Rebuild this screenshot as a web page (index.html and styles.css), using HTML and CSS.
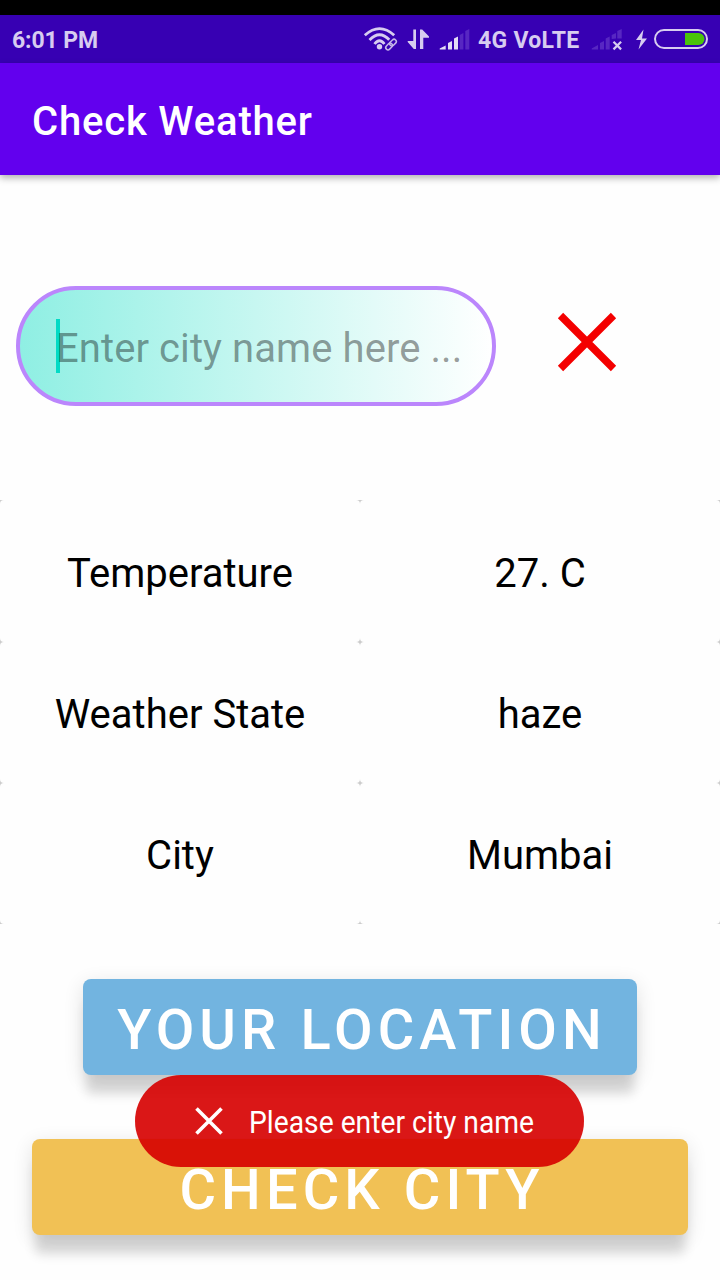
FILE: index.html
```html
<!DOCTYPE html>
<html lang="en">
<head>
<meta charset="utf-8">
<title>Check Weather</title>
<link rel="stylesheet" href="styles.css">
</head>
<body>
<div class="screen">
  <div class="status-bar">
    <span class="clock">6:01 PM</span>
    <div class="status-icons">
      <svg class="signals" width="108" height="48" viewBox="0 0 108 48">
        <g fill="none" stroke="#d7ccf0" stroke-width="2.800">
          <path d="M.8 20.200Q15.500 7 30.200 20.200"/>
          <path d="M5.500 25Q15.500 14.500 25.500 25"/>
          <path d="M10.500 29Q15.500 22.500 20.500 29"/>
        </g>
        <circle cx="15.500" cy="31.800" r="2.700" fill="#d7ccf0"/>
        <g transform="rotate(-45 27 29.500)" fill="none" stroke="#3700b3" stroke-width="4"><rect x="21" y="27" width="12" height="5" rx="2.500"/></g>
        <g transform="rotate(-45 27 29.500)" fill="none" stroke="#c6b6e8" stroke-width="1.500"><rect x="20.500" y="27.300" width="7.500" height="4.500" rx="2.250"/><rect x="26" y="27.300" width="7.500" height="4.500" rx="2.250"/></g>
        <path fill="#d7ccf0" d="M49.300 14.500H52V34h-2.200L43.700 27v-1h5.600zM56 34V14.500h2.200l6.800 7v1.200h-5.700V34z"/>
        <path fill="#e4dcf5" d="M75.700 34.500v-1l6-3v4zM84 34.500V28l4-2v8.500zM90 34.500V23.500l4-2v13z"/>
        <path fill="#5727c2" d="M95.700 34.500V20l3.700-2v16.500zM101.300 34.500V16l4-2v20.500z"/>
      </svg>
      <span class="network">4G VoLTE</span>
      <svg class="power" width="130" height="48" viewBox="0 0 130 48">
        <path fill="#5727c2" d="M1.700 34.500v-1l6.300-3.500v4.500zM10 34.500V28l4-2v8.500zM15.700 34.500V23.500l4-2v13zM21.700 24v-4l4.300-2v5.500zM27.300 23.500V16l4.400-2v9.500z"/>
        <path d="M23.500 26.800l7.600 7.600M31.100 26.800l-7.600 7.600" stroke="#d7ccf0" stroke-width="2.200" fill="none"/>
        <path fill="#d7ccf0" d="M53.500 14.500L46 25h5l-2.500 9.500L57 23.500h-5z"/>
        <rect x="65" y="15" width="52" height="18" rx="9" fill="none" stroke="#d7ccf0" stroke-width="2"/>
        <path fill="#4ac40a" d="M95 18h13.500a6 6 0 0 1 0 12H95z"/>
      </svg>
    </div>
  </div>
  <header class="app-bar"><h1>Check Weather</h1></header>
  <main>
    <div class="search">
      <div class="city-input"><span class="caret"></span><span class="hint">Enter city name here ...</span></div>
      <svg class="clear" width="60" height="60" viewBox="0 0 60 60"><path d="M3.500 3.500L56.500 56.500M56.500 3.500L3.500 56.500" fill="none" stroke="#f40000" stroke-width="7.500"/></svg>
    </div>
    <div class="weather">
      <div class="cell">Temperature</div><div class="cell">27. C</div>
      <div class="cell">Weather State</div><div class="cell">haze</div>
      <div class="cell">City</div><div class="cell">Mumbai</div>
    </div>
    <div class="actions">
      <div class="button location">YOUR LOCATION</div>
      <div class="button check">CHECK CITY</div>
    </div>
  </main>
  <div class="toast">
    <svg width="28" height="28" viewBox="0 0 28 28"><path d="M1.500 1.500l25 25M26.500 1.500l-25 25" fill="none" stroke="#fff" stroke-width="3.600"/></svg>
    <span class="message">Please enter city name</span>
  </div>
</div>
</body>
</html>
```
FILE: styles.css
```css
* { box-sizing: border-box; }
body { margin: 0; background: #fefefe; font-family: Roboto, sans-serif; }
.screen { position: relative; width: 720px; height: 1280px; overflow: hidden; background: #fefefe; }
.status-bar {
  display: flex;
  justify-content: space-between;
  height: 63px;
  padding: 0 10px 0 12px;
  border-top: 15px solid #000;
  background: #3700b3;
  color: #d7ccf0;
  font-size: 23px;
  font-weight: 700;
  line-height: 51px;
}
.clock { letter-spacing: -.1px; white-space: nowrap; }
.status-icons { display: flex; }
.signals { flex: none; overflow: visible; }
.network { width: 112px; margin-left: 6px; letter-spacing: .3px; white-space: nowrap; }
.power { flex: none; margin-right: -10px; }
.app-bar {
  position: relative;
  display: flex;
  align-items: center;
  height: 112px;
  padding: 5px 32px 0;
  background: #6200ee;
  box-shadow: 0 3px 7px rgba(0, 0, 0, .3);
  color: #fff;
}
h1 { margin: 0; font-size: 40px; font-weight: 500; letter-spacing: .82px; }
.search { display: flex; align-items: flex-start; height: 325px; padding: 111px 16px 0; }
.city-input {
  display: flex;
  align-items: center;
  width: 480px;
  height: 120px;
  padding-left: 36px;
  border: 4px solid #bb86fc;
  border-radius: 60px;
  background: linear-gradient(90deg, #8fefe3, #fff);
}
.caret { width: 4px; height: 54px; margin-right: -4px; background: #03dac5; }
.hint { padding-top: 5px; color: rgba(0, 0, 0, .4); font-size: 40px; letter-spacing: .08px; white-space: nowrap; }
.clear { margin: 26px 0 0 61px; }
.weather {
  display: grid;
  grid-template-columns: 360px 360px;
  grid-template-rows: 142px 141px 141px;
  background: #ccc;
}
.cell {
  display: flex;
  align-items: center;
  justify-content: center;
  padding-top: 4px;
  border-radius: 4px;
  background: #fefefe;
  color: #000;
  font-size: 40px;
}
.actions { display: flex; flex-direction: column; align-items: center; gap: 64px; padding-top: 55px; }
.button {
  height: 96px;
  padding: 3px 0 0 4px;
  border-radius: 8px;
  box-shadow: 0 22px 12px -3px rgba(0, 0, 0, .14), 0 5px 20px rgba(0, 0, 0, .12);
  color: #fff;
  font-size: 56px;
  font-weight: 500;
  line-height: 96px;
  letter-spacing: 5.1px;
  text-align: center;
  white-space: nowrap;
}
.location { width: 554px; background: #72b4e0; }
.check { width: 656px; background: #f1c155; }
.toast {
  position: absolute;
  top: 1075px;
  left: 135px;
  display: flex;
  align-items: center;
  width: 449px;
  height: 92px;
  padding-left: 60px;
  border-radius: 46px;
  background: rgba(214, 0, 0, .91);
}
.message {
  padding-top: 2px;
  margin-left: 26px;
  color: #fff;
  font-size: 32px;
  white-space: nowrap;
  transform: scaleX(.883);
  transform-origin: left center;
}
```
